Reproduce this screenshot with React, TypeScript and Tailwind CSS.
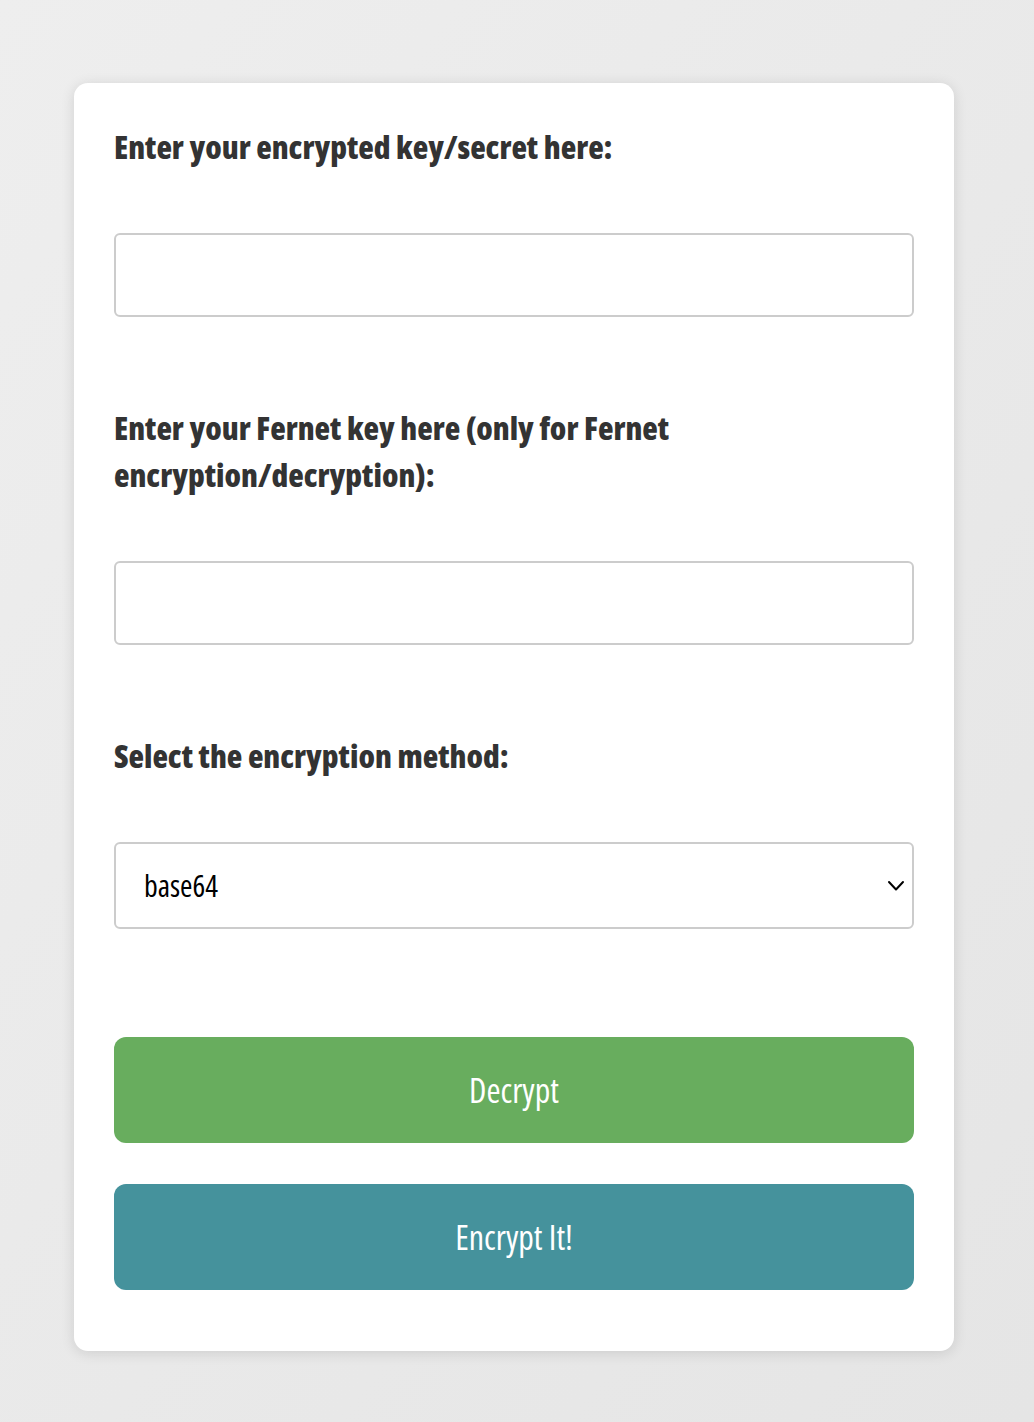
import React, { useState } from 'react';

const condensed = "font-['Open_Sans','Roboto',sans-serif] font-stretch-[75%]";

const labelClass = `block text-[32px] leading-[47px] font-extrabold text-[#333333] ${condensed}`;

const inputClass =
  'block w-full h-[84px] rounded-md border-2 border-[#cccccc] bg-white px-[28px] text-[22px] outline-none';

const App: React.FC = () => {
  const [secret, setSecret] = useState('');
  const [fernetKey, setFernetKey] = useState('');
  const [method, setMethod] = useState('base64');

  return (
    <div className="min-h-screen w-full bg-gradient-to-br from-[#eeeeee] to-[#e5e5e5] pt-[83px] pb-[71px]">
      <div className="ml-[74px] w-[880px] rounded-[14px] bg-white px-10 pt-[40px] pb-[61px] shadow-[0_2px_14px_rgba(0,0,0,0.12)]">
        {/* Secret */}
        <label className={`${labelClass} mb-[63px]`}>Enter your encrypted key/secret here:</label>
        <input
          type="text"
          value={secret}
          onChange={(e) => setSecret(e.target.value)}
          className={`${inputClass} mb-[87px]`}
        />

        {/* Fernet key */}
        <label className={`${labelClass} mb-[63px] w-[600px]`}>
          Enter your Fernet key here (only for Fernet encryption/decryption):
        </label>
        <input
          type="text"
          value={fernetKey}
          onChange={(e) => setFernetKey(e.target.value)}
          className={`${inputClass} mb-[87px]`}
        />

        {/* Method */}
        <label className={`${labelClass} mb-[63px]`}>Select the encryption method:</label>
        <div className="relative mb-[108px]">
          <select
            value={method}
            onChange={(e) => setMethod(e.target.value)}
            className={`block w-full h-[87px] appearance-none rounded-md border-2 border-[#cccccc] bg-white pl-[28px] pr-12 text-[30px] text-black outline-none ${condensed}`}
          >
            <option value="base64">base64</option>
            <option value="fernet">fernet</option>
            <option value="hex">hex</option>
          </select>
          <svg
            className="pointer-events-none absolute right-[9px] top-1/2 -translate-y-1/2"
            width="18"
            height="12"
            viewBox="0 0 18 12"
            fill="none"
            stroke="#000"
            strokeWidth="2"
            strokeLinecap="round"
            strokeLinejoin="round"
          >
            <path d="M2 2 L9 9.5 L16 2" />
          </svg>
        </div>

        {/* Actions */}
        <div className="flex flex-col gap-[41px]">
          <button
            type="button"
            className={`h-[106px] w-full rounded-xl bg-[#68ad5e] text-[34px] font-medium text-white ${condensed}`}
          >
            Decrypt
          </button>
          <button
            type="button"
            className={`h-[106px] w-full rounded-xl bg-[#45929c] text-[34px] font-medium text-white ${condensed}`}
          >
            Encrypt It!
          </button>
        </div>
      </div>
    </div>
  );
};

export default App;
